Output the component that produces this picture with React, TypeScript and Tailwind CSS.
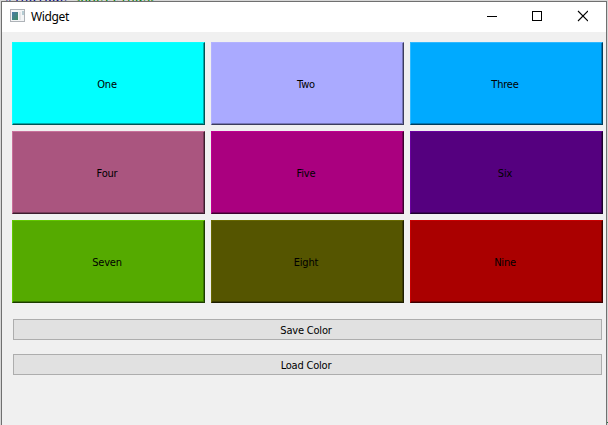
type Tile = { label: string; style: string };

const tiles: Tile[] = [
  { label: 'One', style: 'bg-[#00ffff] border-t-[#10ffff] border-l-[#10ffff] border-b-[#005555] border-r-[#005555] shadow-[inset_-1px_-1px_0_#00aaaa]' },
  { label: 'Two', style: 'bg-[#aaaaff] border-t-[#b2b2ff] border-l-[#b2b2ff] border-b-[#3d3d5c] border-r-[#3d3d5c] shadow-[inset_-1px_-1px_0_#7777b8]' },
  { label: 'Three', style: 'bg-[#00aaff] border-t-[#30b9ff] border-l-[#30b9ff] border-b-[#003d5c] border-r-[#003d5c] shadow-[inset_-1px_-1px_0_#0077b3]' },
  { label: 'Four', style: 'bg-[#aa557f] border-t-[#c8709a] border-l-[#c8709a] border-b-[#3c1d2d] border-r-[#3c1d2d] shadow-[inset_-1px_-1px_0_#773b59]' },
  { label: 'Five', style: 'bg-[#aa007f] border-t-[#c00090] border-l-[#c00090] border-b-[#3c002d] border-r-[#3c002d] shadow-[inset_-1px_-1px_0_#770059]' },
  { label: 'Six', style: 'bg-[#55007f] border-t-[#6a00a0] border-l-[#6a00a0] border-b-[#1d002d] border-r-[#1d002d] shadow-[inset_-1px_-1px_0_#3b0059]' },
  { label: 'Seven', style: 'bg-[#55aa00] border-t-[#62c800] border-l-[#62c800] border-b-[#1d3c00] border-r-[#1d3c00] shadow-[inset_-1px_-1px_0_#3b7700]' },
  { label: 'Eight', style: 'bg-[#555500] border-t-[#686800] border-l-[#686800] border-b-[#1d1d00] border-r-[#1d1d00] shadow-[inset_-1px_-1px_0_#3b3b00]' },
  { label: 'Nine', style: 'bg-[#aa0000] border-t-[#c80000] border-l-[#c80000] border-b-[#3c0000] border-r-[#3c0000] shadow-[inset_-1px_-1px_0_#770000]' },
];

function AppIcon() {
  return (
    <svg width="15" height="13" viewBox="0 0 15 13" className="shrink-0" shapeRendering="crispEdges">
      <defs>
        <linearGradient id="screen" x1="0" y1="0" x2="1" y2="1">
          <stop offset="0" stopColor="#4b7aa8" />
          <stop offset="1" stopColor="#3e8d62" />
        </linearGradient>
      </defs>
      <rect x="0.5" y="0.5" width="14" height="12" fill="#f4f5f6" stroke="#aeb3b8" />
      <rect x="2" y="3" width="6" height="8" fill="url(#screen)" />
      <rect x="9" y="3" width="2" height="8" fill="#e4e6e8" />
      <rect x="12" y="2" width="2" height="4" fill="#b5ccd3" />
    </svg>
  );
}

function TitleBar() {
  return (
    <div className="flex h-[30px] shrink-0 items-start bg-white pl-2 text-black">
      <div className="pt-[7px]"><AppIcon /></div>
      <span className="ml-[6px] mt-[7px] font-['Noto_Sans','Open_Sans',sans-serif] text-[12px] leading-4 tracking-[-0.35px]">Widget</span>
      <svg width="101" height="12" viewBox="0 0 101 12" className="ml-auto mr-[18px] mt-2" fill="none" stroke="#000">
        <path d="M0 6.5h10M45.5 1.5h9v9h-9z" shapeRendering="crispEdges" />
        <path d="M91 1l10 10M101 1L91 11" strokeWidth="1.1" />
      </svg>
    </div>
  );
}

function ActionButton({ label }: { label: string }) {
  return (
    <button className="flex h-[21px] w-[589px] items-center justify-center border border-[#adadad] bg-[#e1e1e1] pr-[3px] pt-[2px]">
      {label}
    </button>
  );
}

export default function App() {
  return (
    <div className="flex h-[425px] w-[608px] flex-col overflow-hidden bg-[#d6d6d6]">
      <div className="flex h-px shrink-0 items-end overflow-hidden pl-[5px] font-['Liberation_Mono',monospace] text-[13px] leading-[4px]">
        <span className="text-[#000080]">#include</span>
        <span className="ml-[5px] text-[#008000]">&lt;QSettings&gt;</span>
      </div>
      <div className="flex grow">
        <div className="ml-px flex w-[606px] flex-col border border-b-0 border-[#707070] bg-[#f0f0f0]">
          <TitleBar />
          <main className="flex flex-col pl-[10px] pt-[10px] font-['DejaVu_Sans_Condensed','DejaVu_Sans',sans-serif] text-[11px] leading-[13px] tracking-[-0.2px] text-black">
            <div className="grid w-[591px] grid-cols-3 gap-[6px]">
              {tiles.map(({ label, style }) => (
                <button key={label} className={`flex h-[83px] items-center justify-center border pr-[3px] pt-[2px] ${style}`}>
                  {label}
                </button>
              ))}
            </div>
            <div className="ml-px mt-4 flex flex-col gap-[14px]">
              <ActionButton label="Save Color" />
              <ActionButton label="Load Color" />
            </div>
          </main>
        </div>
        <div className="mb-[2px] h-px w-px self-end bg-[#1b7a3a]" />
      </div>
    </div>
  );
}
